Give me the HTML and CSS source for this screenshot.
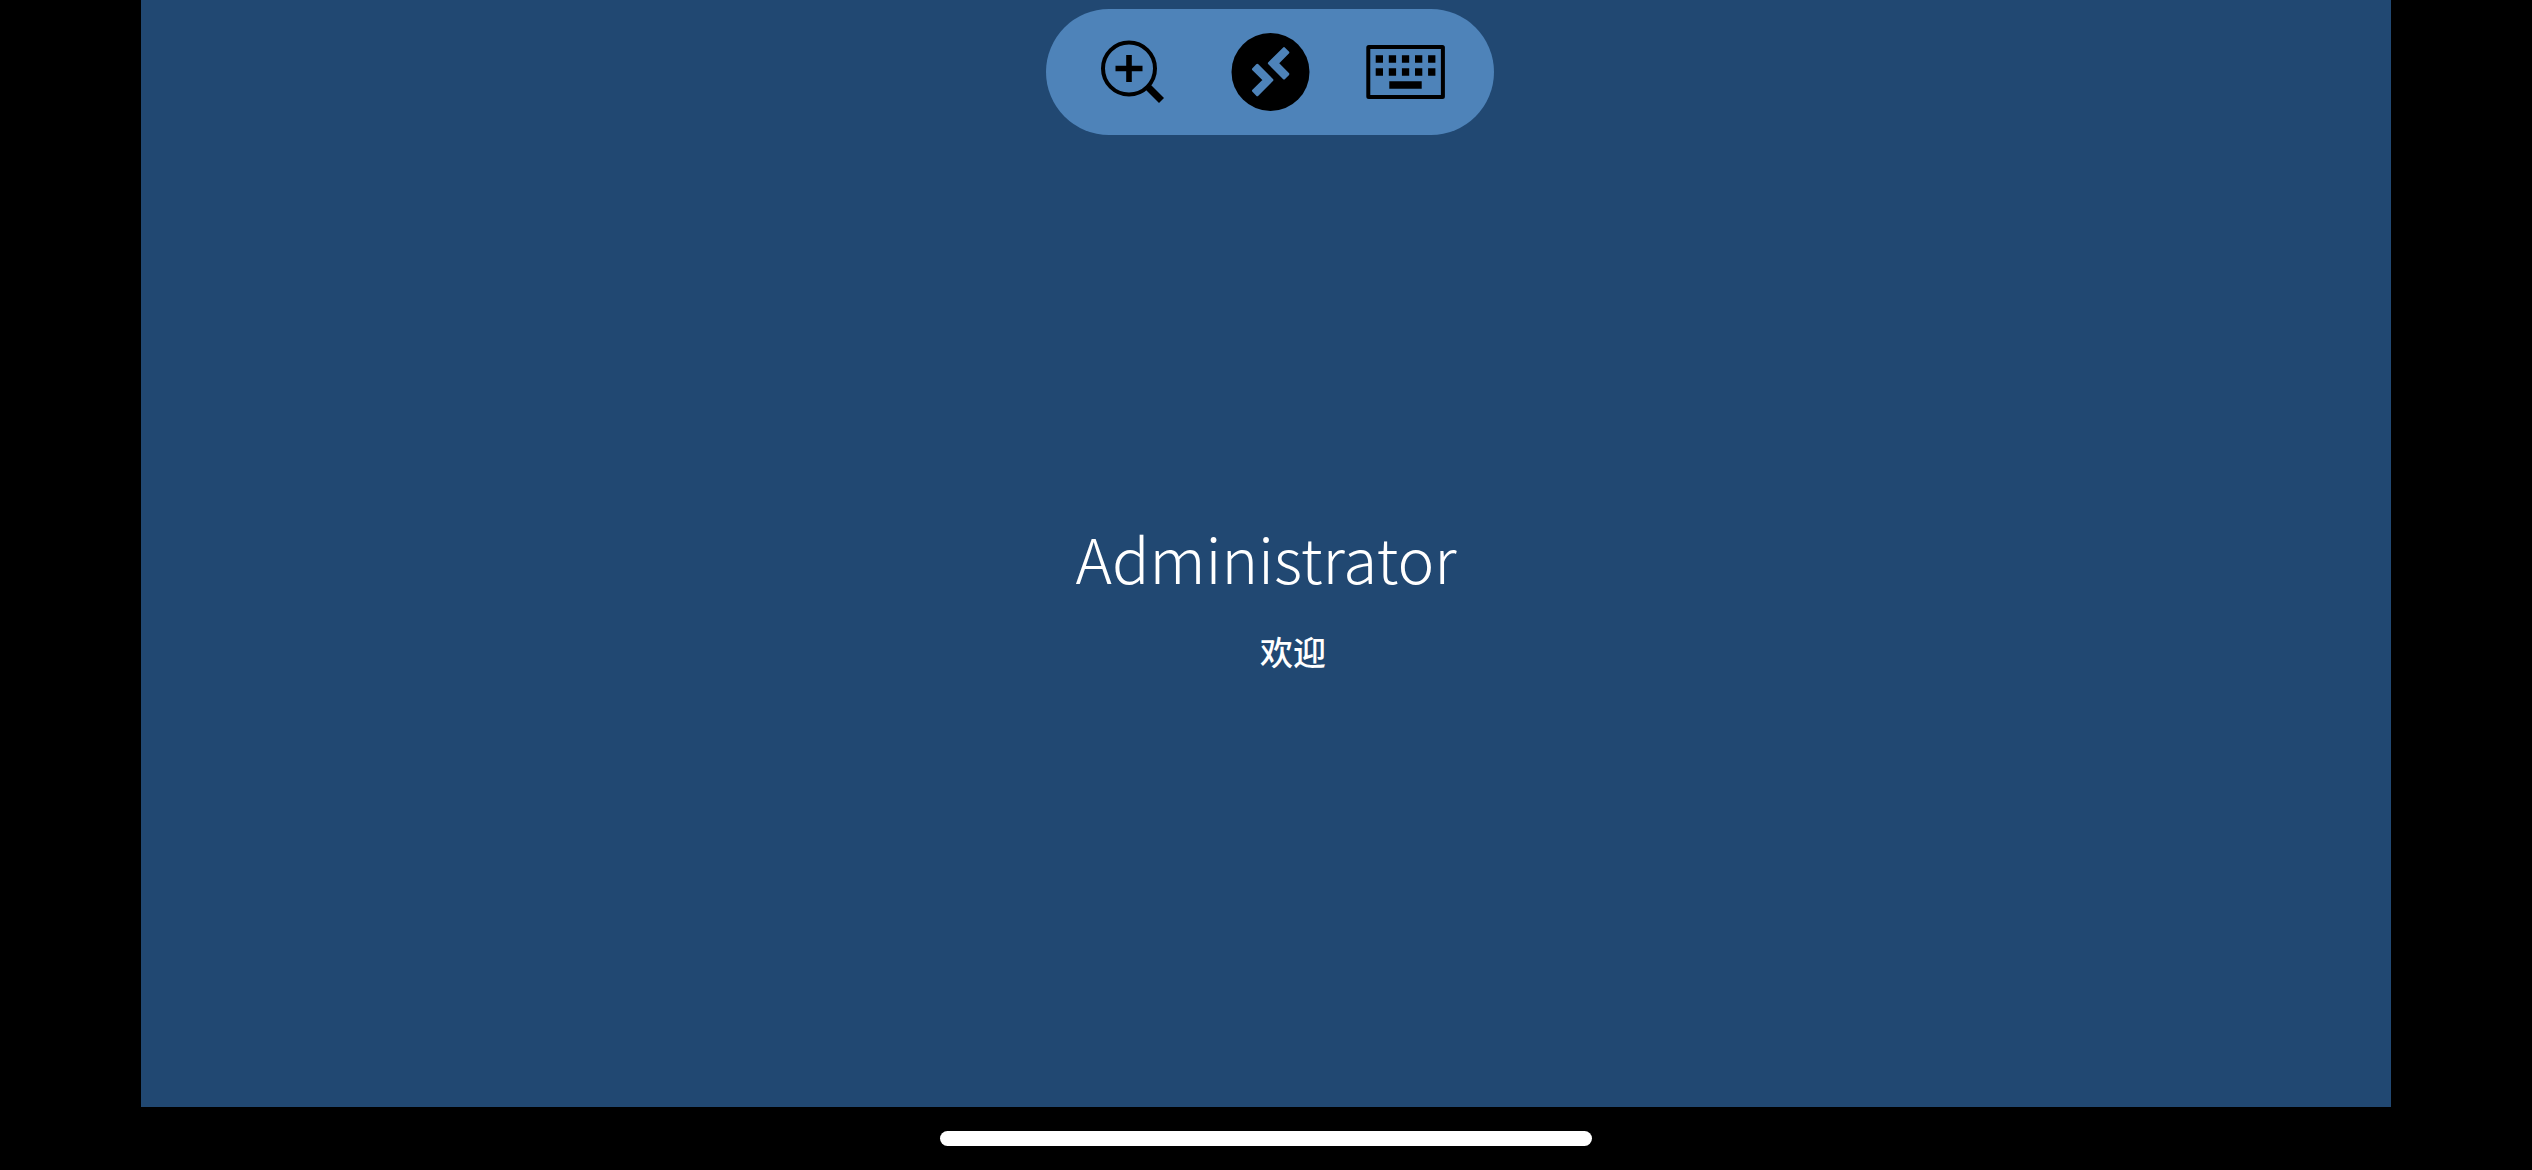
FILE: index.html
```
<!DOCTYPE html>
<html lang="zh-CN">
<head>
  <meta charset="UTF-8" />
  <meta name="viewport" content="width=device-width, initial-scale=1.0"/>
  <title>Remote Desktop</title>
  <link rel="stylesheet" href="styles.css">
</head>
<body>
  <main class="session">
    <div class="toolbar" role="toolbar" aria-label="Connection bar">
      <button type="button" class="toolbar-button" aria-label="Zoom in">
        <svg class="icon" viewBox="0 0 80 80" aria-hidden="true">
          <circle cx="35" cy="36.5" r="26" fill="none" stroke="currentColor" stroke-width="4"/>
          <path d="M35 23v27M21.5 36.5h27" fill="none" stroke="currentColor" stroke-width="5.6"/>
          <path d="M53.5 54.5l14 14" fill="none" stroke="currentColor" stroke-width="7"/>
        </svg>
      </button>
      <button type="button" class="toolbar-button" aria-label="Remote Desktop">
        <svg class="icon" viewBox="0 0 80 80" aria-hidden="true">
          <circle cx="40.5" cy="40" r="39" fill="currentColor"/>
          <g class="icon-cutout">
            <path d="M54 16.7L57.8 20.5L47.2 31.3L57.8 42.1L54 45.9L39.4 31.3Z"/>
            <path d="M27.3 33.4L41.9 48L27.3 62.6L23.5 58.8L34.4 48L23.5 37.2Z"/>
          </g>
        </svg>
      </button>
      <button type="button" class="toolbar-button" aria-label="Keyboard">
        <svg class="icon" viewBox="0 0 80 80" aria-hidden="true">
          <rect x="2.3" y="15" width="74.6" height="50" rx="0.5" fill="none" stroke="currentColor" stroke-width="4"/>
          <path d="M9.7 27h59.8M9.7 40h59.8" fill="none" stroke="currentColor" stroke-width="7.3" stroke-dasharray="7.3 5.8"/>
          <path d="M23.3 53h32.4" fill="none" stroke="currentColor" stroke-width="7.3"/>
        </svg>
      </button>
    </div>

    <h1 class="user-name">Administrator</h1>
    <div class="status" role="status">
      <span class="spinner"></span>
      <span class="status-text">欢迎</span>
    </div>
  </main>

  <footer class="home-area">
    <div class="home-indicator"></div>
  </footer>
</body>
</html>
```
FILE: styles.css
```
*, *::before, *::after {
  box-sizing: border-box;
}

body {
  margin: 0;
  min-height: 100vh;
  display: flex;
  flex-direction: column;
  background-color: #000;
  color: #fff;
  font-family: "Noto Sans CJK SC", sans-serif;
}

.session {
  position: relative;
  flex: 1;
  display: flex;
  flex-direction: column;
  align-items: center;
  justify-content: center;
  margin: 0 141px;
  padding-top: 80px;
  background-color: #214872;
}

/* floats over the remote session */
.toolbar {
  position: absolute;
  top: 9px;
  left: 40.2%;
  display: flex;
  gap: 56px;
  padding: 23px 48px;
  border-radius: 63px;
  background-color: #4e83b9;
}

.toolbar-button {
  width: 80px;
  height: 80px;
  padding: 0;
  border: none;
  background: none;
  color: #000;
  cursor: pointer;
}

.icon {
  display: block;
  width: 100%;
  height: 100%;
}

.icon-cutout {
  fill: #4e83b9;
  stroke: #4e83b9;
  stroke-width: 3;
  stroke-linejoin: round;
}

.user-name {
  margin: 0;
  font-size: 62px;
  font-weight: 300;
  line-height: 88px;
}

.status {
  display: flex;
  align-items: center;
  gap: 12px;
  margin-top: 26px;
}

.spinner {
  width: 42px;
  height: 42px;
}

.status-text {
  font-size: 33px;
  font-weight: 500;
  line-height: 48px;
}

.home-area {
  display: flex;
  justify-content: center;
  padding: 24px 0;
}

.home-indicator {
  width: 652px;
  max-width: 50%;
  height: 15px;
  border-radius: 8px;
  background-color: #fff;
}
```
